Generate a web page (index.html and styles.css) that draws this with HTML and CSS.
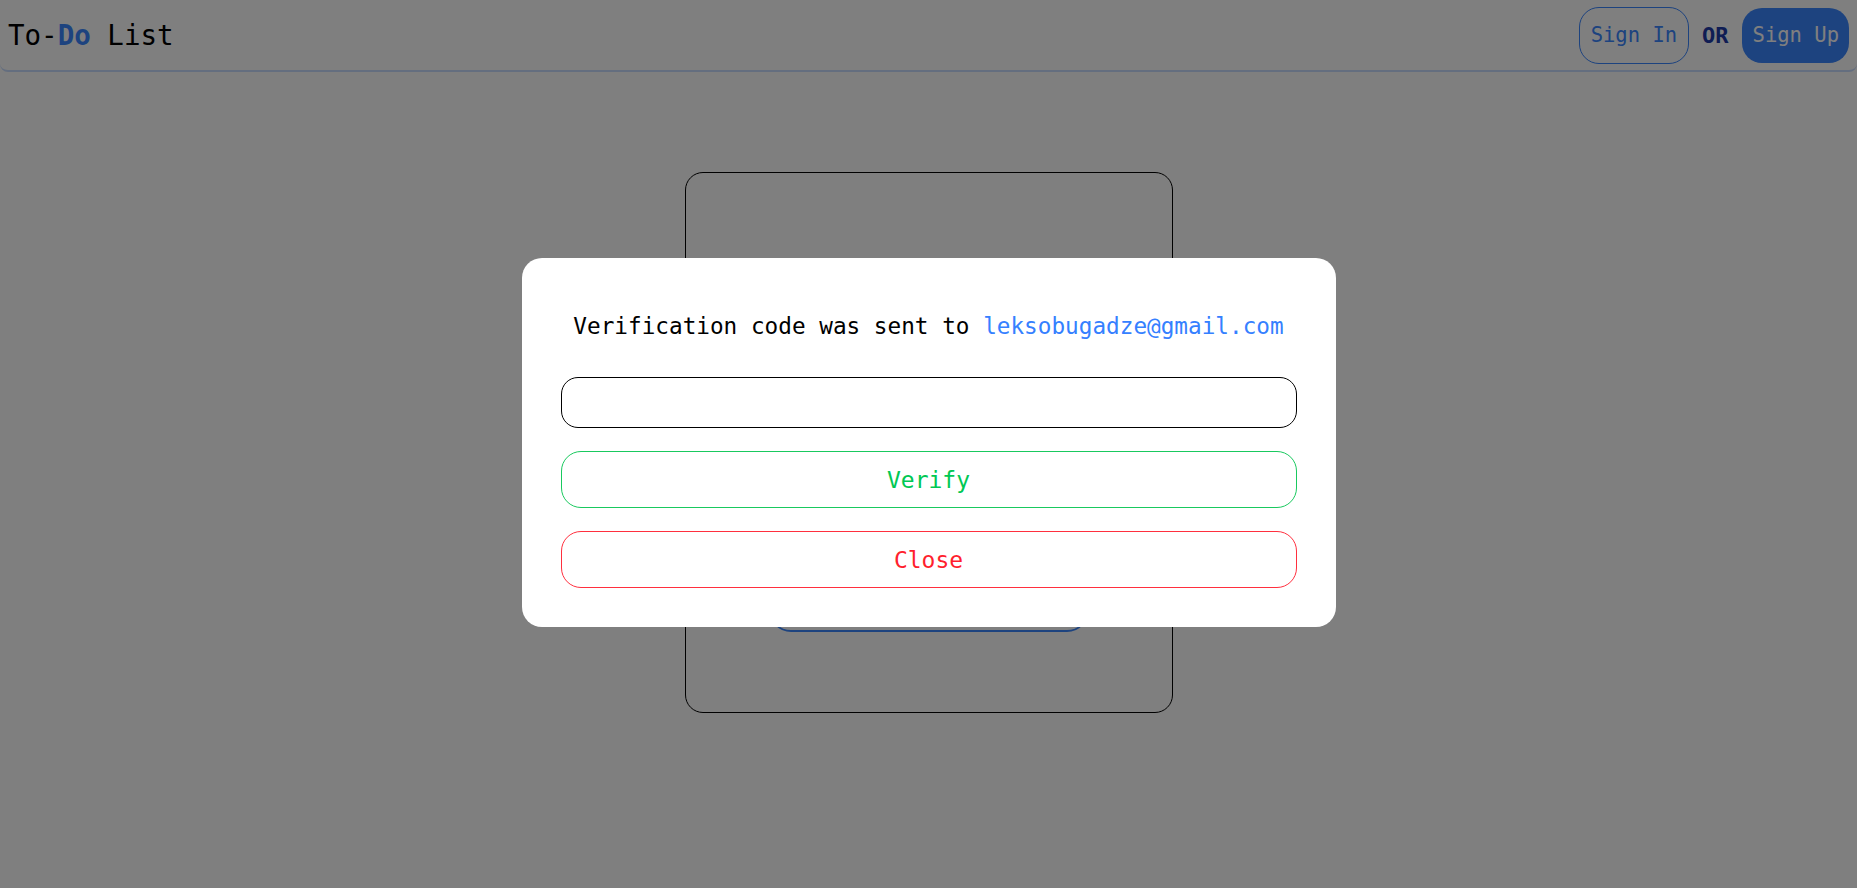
FILE: index.html
```html
<!DOCTYPE html>
<html lang="en">
<head>
<meta charset="utf-8">
<title>To-Do List</title>
<link rel="stylesheet" href="styles.css">
</head>
<body>
<header class="nav">
  <div class="brand">To-<span class="brand-accent">Do</span> List</div>
  <div class="auth">
    <button class="btn-outline">Sign In</button>
    <span class="or">OR</span>
    <button class="btn-fill">Sign Up</button>
  </div>
</header>
<main class="page">
  <section class="card">
    <button class="card-btn">Sign Up</button>
  </section>
</main>
<div class="overlay">
  <div class="modal">
    <p class="modal-text">Verification code was sent to <span class="email">leksobugadze@gmail.com</span></p>
    <input class="code-input" type="text">
    <button class="btn-verify">Verify</button>
    <button class="btn-close">Close</button>
  </div>
</div>
</body>
</html>
```
FILE: styles.css
```css
* { box-sizing: border-box; }
html, body { margin: 0; padding: 0; }
body {
  background: #ffffff;
  font-family: "DejaVu Sans Mono", "Liberation Mono", monospace;
  color: #000;
  height: 888px;
  overflow: hidden;
}
.nav {
  height: 72px;
  display: flex;
  align-items: center;
  justify-content: space-between;
  padding: 0 8px 0 8px;
  border-bottom: 2px solid #c8dcff;
  border-radius: 0 0 8px 8px;
  background: #fff;
}
.brand {
  font-size: 27.5px;
  line-height: 32px;
}
.brand-accent { color: #3a86ff; font-weight: bold; }
.auth {
  display: flex;
  align-items: center;
  gap: 13px;
}
.btn-outline, .btn-fill, .card-btn, .btn-verify, .btn-close {
  font-family: "DejaVu Sans Mono", "Liberation Mono", monospace;
  cursor: pointer;
}
.btn-outline {
  height: 57px;
  padding: 0 11px;
  border: 1px solid #3a86ff;
  border-radius: 20px;
  background: transparent;
  color: #3a86ff;
  font-size: 20.5px;
}
.or {
  font-weight: bold;
  font-size: 22px;
  color: #1e3aa8;
}
.btn-fill {
  height: 55px;
  padding: 0 10px 0 11px;
  border: none;
  border-radius: 20px;
  background: #3a86ff;
  color: #fff;
  font-size: 20.5px;
}
.page {
  display: flex;
  justify-content: center;
  padding-top: 100px;
}
.card {
  width: 488px;
  height: 541px;
  border: 1px solid #000;
  border-radius: 18px;
  display: flex;
  flex-direction: column;
  align-items: center;
  justify-content: flex-end;
  padding-bottom: 80px;
}
.card-btn {
  width: 320px;
  height: 50px;
  border: 2px solid #3a86ff;
  border-radius: 22px;
  background: transparent;
  color: #3a86ff;
  font-size: 20px;
}
.overlay {
  position: fixed;
  inset: 0;
  background: rgba(0, 0, 0, 0.5);
  display: flex;
  align-items: center;
  justify-content: center;
  padding-bottom: 3px;
}
.modal {
  width: 814px;
  background: #fff;
  border-radius: 20px;
  padding: 40px 39px 39px;
  display: flex;
  flex-direction: column;
  gap: 23px;
}
.modal-text {
  margin: 15px 0 14px;
  text-align: center;
  font-size: 22.7px;
  line-height: 27px;
  color: #000;
}
.email { color: #3580ff; }
.code-input {
  height: 51px;
  border: 1px solid #000;
  border-radius: 17px;
  padding: 0 16px;
  font-family: "DejaVu Sans Mono", monospace;
  font-size: 20px;
  outline: none;
}
.btn-verify, .btn-close {
  height: 57px;
  border-radius: 20px;
  background: #fff;
  font-size: 23px;
}
.btn-verify {
  border: 1px solid #19c95e;
  color: #00c853;
}
.btn-close {
  border: 1px solid #ff2f3e;
  color: #ff1f2e;
}
```
